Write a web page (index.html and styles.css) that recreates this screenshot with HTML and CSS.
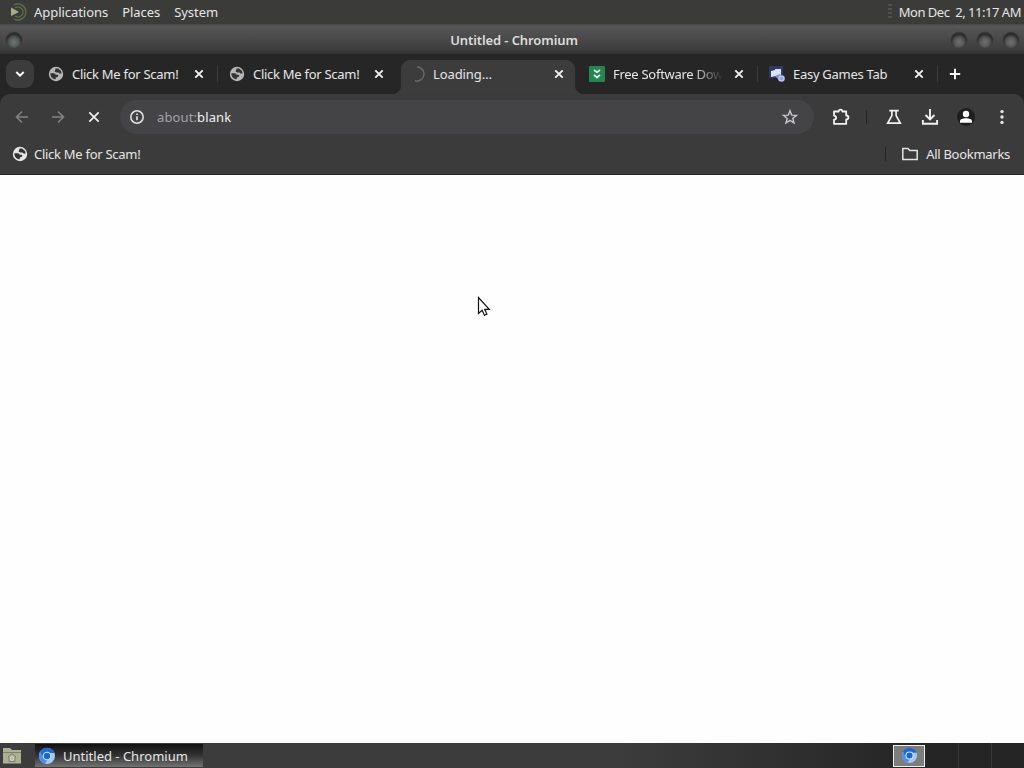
FILE: index.html
```html
<!DOCTYPE html>
<html lang="en">
<head>
    <meta charset="UTF-8">
    <meta name="viewport" content="width=device-width, initial-scale=1.0">
    <title>Untitled - Chromium</title>
    <link rel="stylesheet" href="styles.css">
</head>
<body>

    <svg class="defs" width="0" height="0">
        <symbol id="globe" viewBox="0 0 16 16">
            <circle cx="8" cy="8" r="7.2" fill="currentColor"/>
            <path class="land" d="M2.300 7.200 6 7.300c1 .1 1.500.7 1.500 1.500h1.700c.8 0 1.200.5 1 1.200-.3 1-1.300 1.400-2.500 1.400v1.900C4.500 13.300 2.300 10.500 2.300 7.200zM7.600 2.600h2.500l3 2.500.5 2.700-2.100-.2-1-1.200H8.400L6.600 5.500z"/>
        </symbol>
        <symbol id="cross" viewBox="0 0 10 10">
            <path d="M1.300 1.300l7.400 7.400M8.700 1.300 1.300 8.700" stroke="currentColor" stroke-width="1.900"/>
        </symbol>
        <symbol id="chromium" viewBox="0 0 18 18">
            <circle cx="9" cy="9" r="8" fill="#a5c9f7"/>
            <path d="M2 5A8 8 0 0 1 16.500 6H9L5 11z" fill="#2268cf"/>
            <path d="M2 5a8 8 0 0 0 5 11.700L10 12 5.500 11z" fill="#4b91ea"/>
            <circle cx="9" cy="9" r="4.300" fill="#d5e6fb"/>
            <circle cx="9" cy="9" r="3.200" fill="#1b66d2"/>
        </symbol>
    </svg>

    <div class="panel">
        <svg class="menu-logo" width="20" height="20" viewBox="0 0 20 20" fill="none">
            <path d="M5 3a8 8 0 1 1 0 14M6 6a5 5 0 1 1 0 8" stroke="#61714a" stroke-width="1.300"/>
            <path d="M2 5.500 10 10l-8 4z" fill="#a3b07c"/>
        </svg>
        <span>Applications</span>
        <span>Places</span>
        <span>System</span>
        <i class="grip"></i>
        <span class="clock">Mon Dec&nbsp; 2, 11:17 AM</span>
    </div>

    <div class="titlebar">
        <i class="knob green"></i>
        <span class="title">Untitled - Chromium</span>
        <div class="knobs"><i class="knob"></i><i class="knob"></i><i class="knob"></i></div>
    </div>

    <div class="tabstrip">
        <button class="tab-search">
            <svg width="10" height="8" viewBox="0 0 10 8" fill="none"><path d="M1.300 2 5 5.700 8.700 2" stroke="#fff" stroke-width="1.900"/></svg>
        </button>
        <div class="tab first">
            <svg class="favicon dim"><use href="#globe"/></svg>
            <span class="label">Click Me for Scam!</span>
            <svg class="close"><use href="#cross"/></svg>
        </div>
        <div class="tab no-sep">
            <svg class="favicon dim"><use href="#globe"/></svg>
            <span class="label">Click Me for Scam!</span>
            <svg class="close"><use href="#cross"/></svg>
        </div>
        <div class="tab active">
            <svg class="favicon" viewBox="0 0 16 16" fill="none"><path d="M8 1a7 7 0 1 1-2 13.700" stroke="#68686b" stroke-width="1.500"/></svg>
            <span class="label">Loading…</span>
            <svg class="close"><use href="#cross"/></svg>
        </div>
        <div class="tab">
            <svg class="favicon" viewBox="0 0 16 16" fill="none">
                <rect width="16" height="16" rx="1" fill="#25864f"/>
                <path d="M5 4 8 6.300 11 4M5 8.800 8 11.500 11 8.800" stroke="#e5f5ea" stroke-width="1.700"/>
            </svg>
            <span class="label fade">Free Software Dow</span>
            <svg class="close"><use href="#cross"/></svg>
        </div>
        <div class="tab">
            <svg class="favicon" viewBox="0 0 16 16">
                <path d="M0 0h14v12H0z" fill="#30395f"/>
                <path d="M2 5l4-1V3h6v6l-5 1-5 1z" fill="#dce0fb"/>
                <path d="M6 10l5-2 2 3-3 3z" fill="#828ed1"/>
                <circle cx="12.500" cy="12.500" r="3.300" fill="#b8c0ee"/>
                <circle cx="12.500" cy="12.500" r="1.300" fill="#8994ce"/>
            </svg>
            <span class="label">Easy Games Tab</span>
            <svg class="close"><use href="#cross"/></svg>
        </div>
        <svg class="new-tab" width="12" height="12" viewBox="0 0 12 12"><path d="M6 .8v10.400M.8 6h10.400" stroke="#fff" stroke-width="1.900"/></svg>
    </div>

    <div class="browser">
        <div class="toolbar">
            <div class="nav">
                <svg width="14" height="14" viewBox="0 0 14 14" fill="none" stroke="#828282" stroke-width="1.600"><path d="M13 7H2M7 1.500 1.500 7 7 12.500"/></svg>
                <svg width="14" height="14" viewBox="0 0 14 14" fill="none" stroke="#828282" stroke-width="1.600"><path d="M1 7h11M7 1.500 12.500 7 7 12.500"/></svg>
                <svg width="14" height="14" viewBox="0 0 14 14" stroke="#f1f1f1" stroke-width="1.700"><path d="M2.300 2.300l9.400 9.400M11.700 2.300l-9.400 9.400"/></svg>
            </div>
            <div class="omnibox">
                <svg width="16" height="16" viewBox="0 0 16 16" fill="none" stroke="#e6e6e6" stroke-width="1.500"><circle cx="8" cy="8" r="6.200"/><path d="M8 7.200v4M8 4.500V6" stroke-width="1.600"/></svg>
                <span class="url">about:<b>blank</b></span>
                <svg width="16" height="16" viewBox="0 0 16 16" fill="none" stroke="#c8c8cc" stroke-width="1.400"><path d="M8 1.700l1.700 4.400 4.700.3-3.600 3 1.200 4.600L8 11.400 4 14l1.200-4.600-3.600-3 4.700-.3z"/></svg>
            </div>
            <div class="actions">
                <svg width="18" height="18" viewBox="0 0 18 18" fill="none" stroke="#f1f1f1" stroke-width="1.800"><path d="M2 3.500h4.600C6.600 1 10.400 1 10.400 3.500H14.200v4c3 .2 3 3.800 0 4v4.300H2v-4.200c2.800-.3 2.800-3.600 0-4z" stroke-linejoin="round"/></svg>
                <i class="divider"></i>
                <svg width="16" height="16" viewBox="0 0 16 16" fill="none" stroke="#f1f1f1" stroke-width="1.700"><path d="M3.300 1.600h9.400M5.900 1.600v5L1.700 14.200h12.600L10.100 6.600v-5"/></svg>
                <svg width="18" height="18" viewBox="0 0 18 18" fill="none" stroke="#f1f1f1" stroke-width="1.900"><path d="M9 1v10M4.500 7 9 11.500 13.500 7M1.900 12v3.800h14.200V12"/></svg>
                <svg width="20" height="20" viewBox="0 0 20 20" fill="#fff"><circle cx="10" cy="10" r="9" fill="#1e1e1e"/><circle cx="10" cy="7" r="3.200"/><path d="M4 15.800V14c0-3.800 12-3.800 12 0v1.800z"/></svg>
                <svg width="4" height="16" viewBox="0 0 4 16" fill="#e8e8e8"><circle cx="2" cy="2.600" r="1.700"/><circle cx="2" cy="8" r="1.700"/><circle cx="2" cy="13.400" r="1.700"/></svg>
            </div>
        </div>
        <div class="bookmarks">
            <svg class="favicon"><use href="#globe"/></svg>
            <span>Click Me for Scam!</span>
            <i class="divider"></i>
            <svg width="16" height="14" viewBox="0 0 16 14" fill="none" stroke="#e4e4e4" stroke-width="1.500"><path d="M.8 1.500h5.200l1.800 2h7.400v9H.8z"/></svg>
            <span>All Bookmarks</span>
        </div>
    </div>

    <div class="page"></div>

    <div class="taskbar">
        <svg class="desktop" width="20" height="18" viewBox="0 0 20 18" fill="none">
            <path d="M1 1h7l2 2h9v13.500H1z" fill="#aeb096"/>
            <path d="M1 5.500h18" stroke="#7c7e68"/>
            <path d="M6 10l4-3.500 4 3.500M7 9.500v5h6v-5" stroke="#7d7f6b"/>
            <circle cx="10" cy="11.500" r="1.800" stroke="#e2e3ce"/>
        </svg>
        <div class="task">
            <svg width="18" height="18"><use href="#chromium"/></svg>
            <span>Untitled - Chromium</span>
        </div>
        <div class="workspaces">
            <div class="ws current"><svg width="17" height="17"><use href="#chromium"/></svg></div>
            <div class="ws"></div>
            <div class="ws"></div>
            <div class="ws"></div>
        </div>
    </div>

    <svg class="cursor" width="14" height="22" viewBox="0 0 14 22"><path d="M1.500 1.500v16l3.600-3.200 2.300 5 2.500-1.200-2.200-4.800h4.600z" fill="#fff" stroke="#111" stroke-width="1.200"/></svg>

</body>
</html>
```
FILE: styles.css
```css
* { box-sizing: border-box; }
body {
    margin: 0;
    width: 1024px;
    height: 768px;
    overflow: hidden;
    display: flex;
    flex-direction: column;
    font-family: "Noto Sans", sans-serif;
    font-size: 13px;
    line-height: 18px;
    color: #e6e6e6;
    background: #fff;
}
svg { flex: none; display: block; }
.defs { position: absolute; }
.land { fill: #333; }

/* top panel */
.panel {
    height: 24px;
    display: flex;
    align-items: center;
    gap: 14px;
    padding: 0 3px 0 9px;
    background: #3b3b3a;
    white-space: nowrap;
    letter-spacing: -0.05px;
}
.menu-logo { margin-right: -9px; }
.grip {
    width: 4px;
    height: 16px;
    margin-left: auto;
    margin-right: -7px;
    background: repeating-linear-gradient(#505050 0 2px, #3b3b3a 2px 4px);
}
.clock { letter-spacing: -0.48px; }

/* window title */
.titlebar {
    height: 30px;
    display: grid;
    grid-template-columns: 1fr auto 1fr;
    align-items: center;
    padding: 0 4px 0 5px;
    background: linear-gradient(#484848, #575757 2px, #3d3d3d 26px, #303030);
}
.title {
    font-weight: 600;
    color: #dcdcdc;
    padding: 2px 0 0 3px;
    letter-spacing: -0.1px;
}
.knobs { display: flex; gap: 8px; justify-content: flex-end; }
.knob {
    width: 18px;
    height: 18px;
    margin-top: 2px;
    border-radius: 50%;
    background: radial-gradient(circle at 50% 62%, #707070 0, #5c5c5c 4px, #484848 6px, #2a2a2a 8px, #363636 11px);
    -webkit-mask-image: radial-gradient(circle, #000 7px, transparent 9px);
    mask-image: radial-gradient(circle, #000 7px, transparent 9px);
}
.green { background: radial-gradient(circle at 50% 62%, #707472 0, #58605c 4px, #45504b 6px, #2a2a2a 8px, #363636 11px); }

/* tabs */
.tabstrip {
    height: 40px;
    display: flex;
    align-items: center;
    padding: 0 0 0 6px;
    background: #262626;
    letter-spacing: -0.28px;
}
.tab-search {
    width: 28px;
    height: 28px;
    margin-right: 3px;
    padding: 0;
    display: flex;
    align-items: center;
    justify-content: center;
    border: 0;
    border-radius: 9px;
    background: #3c3c3c;
}
.tab {
    position: relative;
    width: 180px;
    height: 40px;
    display: flex;
    align-items: center;
    padding: 0 13px 0 12px;
}
.tab.first { padding-left: 11px; }
.tab::after {
    content: "";
    position: absolute;
    right: -1px;
    top: 12px;
    width: 1px;
    height: 16px;
    background: #3c3c3c;
}
.tab.no-sep::after { display: none; }
.favicon { width: 16px; height: 16px; }
.dim { color: #b7b7b9; }
.label {
    flex: 1;
    margin: 0 9px 0 8px;
    overflow: hidden;
    white-space: nowrap;
}
.fade {
    -webkit-mask-image: linear-gradient(to right, #000 72%, transparent 98%);
    mask-image: linear-gradient(to right, #000 72%, transparent 98%);
}
.close { width: 10px; height: 10px; color: #f1f1f1; }
.active {
    width: 174px;
    height: 34px;
    margin: 6px 2px 0 4px;
    padding: 0 11px 6px 8px;
    border-radius: 9px 9px 0 0;
    background: #3c3c3d;
}
.active .label { letter-spacing: -0.1px; }
.active::before, .active::after {
    content: "";
    position: absolute;
    top: auto;
    bottom: 0;
    width: 9px;
    height: 9px;
}
.active::before { left: -9px; background: radial-gradient(circle at 0 0, transparent 9px, #3c3c3d 9.5px); }
.active::after { right: -9px; background: radial-gradient(circle at 100% 0, transparent 9px, #3c3c3d 9.5px); }
.new-tab { margin-left: 12px; }

/* toolbar and bookmarks */
.browser {
    height: 81px;
    border-bottom: 1px solid #242424;
    background: linear-gradient(#262626 12px, #3b3b3b 12px);
}
.toolbar {
    height: 46px;
    display: flex;
    align-items: center;
    padding: 0 20px 0 15px;
    border-radius: 10px 10px 0 0;
    background: #3b3b3b;
}
.nav { display: flex; gap: 22px; width: 105px; }
.omnibox {
    width: 694px;
    height: 34px;
    display: flex;
    align-items: center;
    padding: 0 16px 0 9px;
    border-radius: 17px;
    background: #444447;
}
.url {
    flex: 1;
    margin-left: 12px;
    color: #a3a3a7;
    letter-spacing: 0.12px;
}
.url b { font-weight: 400; color: #f0f0f0; }
.actions {
    flex: 1;
    display: flex;
    align-items: center;
    justify-content: flex-end;
    gap: 18px;
}
.actions .divider { margin-right: 1px; margin-left: -2px; }
.actions svg:nth-child(4) { margin-left: 1px; }
.actions svg:nth-child(5) { margin: 0 6px 0 -1px; }
.divider { width: 1px; height: 14px; background: #252525; }
.bookmarks {
    height: 34px;
    display: flex;
    align-items: center;
    padding: 0 14px 6px 12px;
    letter-spacing: -0.28px;
}
.bookmarks span { margin-left: 6px; }
.bookmarks .divider { margin: 0 16px 0 auto; }
.bookmarks .divider ~ span { margin-left: 8px; }

.page { flex: 1; background: #fefefe; }

/* bottom panel */
.taskbar {
    height: 25px;
    display: flex;
    align-items: center;
    padding-left: 2px;
    background: linear-gradient(to right, #3c3c3c 60%, #252525 90%);
}
.task {
    width: 168px;
    height: 23px;
    margin-left: 13px;
    display: flex;
    align-items: center;
    gap: 7px;
    padding-left: 3px;
    background: linear-gradient(#111, #333 50%, #737373);
}
.workspaces {
    display: flex;
    height: 25px;
    margin-left: auto;
    align-items: center;
}
.ws { width: 33px; height: 25px; border-right: 1px solid #383838; }
.ws:last-child { border-right: 0; width: 32px; }
.current {
    width: 32px;
    height: 22px;
    display: flex;
    align-items: center;
    justify-content: center;
    border: 1px solid #eee;
    background: #7d7d7b;
}
.current + .ws { width: 34px; }

.cursor { position: absolute; left: 477px; top: 296px; }
```
